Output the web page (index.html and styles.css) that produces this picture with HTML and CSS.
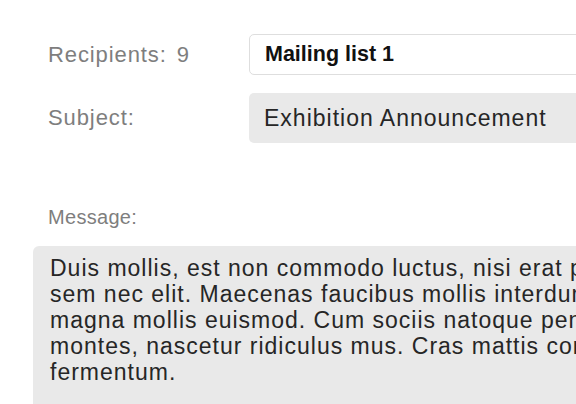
FILE: index.html
```html
<!DOCTYPE html>
<html>
<head>
<meta charset="utf-8">
<link rel="stylesheet" href="styles.css">
</head>
<body>
<div class="page">
  <div class="form">
    <div class="label">Recipients: <span class="count">9</span></div>
    <div class="field field-input">Mailing list 1</div>
    <div class="label">Subject:</div>
    <div class="field field-static">Exhibition Announcement</div>
  </div>
  <div class="message-label">Message:</div>
  <div class="message">
    <div class="line">Duis mollis, est non commodo luctus, nisi erat porttitor ligula, eget lacinia odio</div>
    <div class="line">sem nec elit. Maecenas faucibus mollis interdum. Etiam porta sem malesuada</div>
    <div class="line">magna mollis euismod. Cum sociis natoque penatibus et magnis dis parturient</div>
    <div class="line">montes, nascetur ridiculus mus. Cras mattis consectetur purus sit amet</div>
    <div class="line">fermentum.</div>
  </div>
</div>
</body>
</html>
```
FILE: styles.css
```css
html, body {
  margin: 0;
  padding: 0;
  background: #ffffff;
  overflow: hidden;
}
.page {
  width: 576px;
  height: 404px;
  overflow: hidden;
  font-family: "Liberation Sans", Arial, sans-serif;
  font-size: 23px;
  color: #262626;
}
.form {
  display: grid;
  grid-template-columns: 201px 340px;
  row-gap: 18px;
  align-items: center;
  padding: 34px 0 0 48px;
}
.label {
  color: #7e7e7e;
  font-size: 22px;
  letter-spacing: 0.9px;
  white-space: nowrap;
}
.count {
  margin-left: 3px;
}
.field {
  box-sizing: border-box;
  border-radius: 5px;
  padding-left: 15px;
  white-space: nowrap;
  overflow: hidden;
}
.field-input {
  height: 41px;
  line-height: 39px;
  border: 1px solid #dedede;
  background: #fff;
  font-weight: bold;
  font-size: 21.5px;
  color: #111;
}
.field-static {
  height: 50px;
  line-height: 50px;
  background: #e9e9e9;
  letter-spacing: 1px;
}
.message-label {
  color: #7e7e7e;
  font-size: 20px;
  letter-spacing: 0.3px;
  padding: 62px 0 0 48px;
  line-height: 24px;
}
.message {
  margin: 17px 0 0 33px;
  width: 600px;
  height: 200px;
  box-sizing: border-box;
  background: #e9e9e9;
  border-radius: 6px;
  padding: 9px 0 0 17px;
  line-height: 26px;
  letter-spacing: 1px;
  overflow: hidden;
}
.line {
  white-space: nowrap;
}
```
